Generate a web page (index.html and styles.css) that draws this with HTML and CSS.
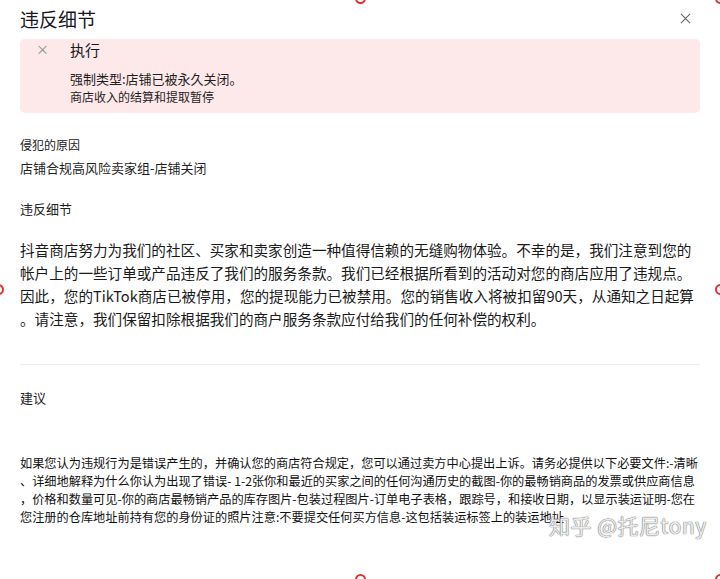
FILE: index.html
```html
<!DOCTYPE html>
<html lang="zh-CN">
<head>
<meta charset="utf-8">
<title>违反细节</title>
<meta name="viewport" content="width=device-width,initial-scale=1">
<link rel="stylesheet" href="styles.css">
</head>
<body>

<div class="modal">
  <div class="modal-head">
    <h1>违反细节</h1>
    <button class="close" aria-label="关闭">
      <svg viewBox="0 0 12 12"><path d="M1 1l10 10M11 1L1 11"/></svg>
    </button>
  </div>

  <div class="alert">
    <span class="alert-x">×</span>
    <div class="alert-body">
      <div class="alert-title">执行</div>
      <div class="alert-main">强制类型:店铺已被永久关闭。</div>
      <div class="alert-sub">商店收入的结算和提取暂停</div>
    </div>
  </div>

  <div class="label first">侵犯的原因</div>
  <div class="value">店铺合规高风险卖家组-店铺关闭</div>

  <div class="label second">违反细节</div>
  <p class="detail">抖音商店努力为我们的社区、买家和卖家创造一种值得信赖的无缝购物体验。不幸的是，我们注意到您的<br>帐户上的一些订单或产品违反了我们的服务条款。我们已经根据所看到的活动对您的商店应用了违规点。<br>因此，您的TikTok商店已被停用，您的提现能力已被禁用。您的销售收入将被扣留90天，从通知之日起算<br>。请注意，我们保留扣除根据我们的商户服务条款应付给我们的任何补偿的权利。</p>

  <hr>

  <div class="label advice">建议</div>
  <p class="suggest">如果您认为违规行为是错误产生的，并确认您的商店符合规定，您可以通过卖方中心提出上诉。请务必提供以下必要文件:-清晰<br>、详细地解释为什么你认为出现了错误- 1-2张你和最近的买家之间的任何沟通历史的截图-你的最畅销商品的发票或供应商信息<br>，价格和数量可见-你的商店最畅销产品的库存图片-包装过程图片-订单电子表格，跟踪号，和接收日期，以显示装运证明-您在<br>您注册的仓库地址前持有您的身份证的照片注意:不要提交任何买方信息-这包括装运标签上的装运地址</p>
</div>

<div class="watermark">知乎 @托尼tony</div>

<span class="handle h-top"></span>
<span class="handle h-tr"></span>
<span class="handle h-left"></span>
<span class="handle h-right"></span>
<span class="handle h-bottom"></span>
<span class="handle h-br"></span>

</body>
</html>
```

FILE: styles.css
```css
*{box-sizing:border-box}
html,body{margin:0;height:100%;overflow:hidden}
body{background:#fff;color:#1f1f1f;
     font-family:"Noto Sans CJK SC","Noto Sans",sans-serif;position:relative}
.modal{padding:0 20px}
.modal-head{display:flex;align-items:center;justify-content:space-between;height:36px}
.modal-head h1{margin:0;font-size:19px;font-weight:400;color:#161823}
.close{border:none;background:transparent;padding:0;width:12px;height:12px;margin-right:8px;cursor:pointer}
.close svg{width:11px;height:11px;display:block;stroke:#666;stroke-width:1.2;fill:none}

.alert{display:flex;background:#fde8ea;border-radius:5px;margin-top:3px;height:74px;padding:1px 0 0 16px}
.alert-x{color:#888;font-size:13px;width:34px;line-height:18px}
.alert-title{font-size:15px;line-height:20px;color:#161823}
.alert-main{font-size:13px;line-height:18px;margin-top:10px}
.alert-sub{font-size:12px;line-height:18px}

.label{font-size:12px;line-height:16px;color:#222}
.label.first{margin-top:24px}
.value{font-size:13px;line-height:18px;margin-top:6px}
.label.second{margin-top:24px;font-size:13px}
.detail{margin:21px 0 0;font-size:14.6px;line-height:23px;white-space:nowrap;color:#1a1a1a}
hr{border:none;border-top:1px solid #ececec;margin:34px 0 0}
.label.advice{margin-top:25px;font-size:13px}
.suggest{margin:48px 0 0;font-size:12.2px;line-height:18px;white-space:nowrap;color:#111}

.watermark{position:absolute;left:549px;top:510px;font-size:21px;color:#ececec;
           text-shadow:0 0 1px #666,0 0 1px #666;letter-spacing:.5px}

.handle{position:absolute;width:11px;height:11px;border:2px solid #e0322f;border-radius:50%;background:#fff}
.h-top{left:355px;top:-7px}
.h-tr{left:715px;top:-7px}
.h-left{left:-7px;top:284px}
.h-right{left:715px;top:284px}
.h-bottom{left:355px;top:574px}
.h-br{left:715px;top:574px}
```
